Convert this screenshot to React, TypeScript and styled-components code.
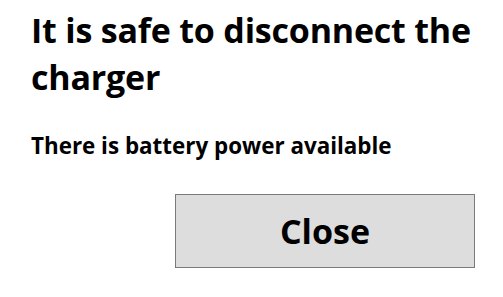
import styled, { createGlobalStyle } from 'styled-components';

const GlobalStyle = createGlobalStyle`
  html, body {
    margin: 0;
    padding: 0;
    background: #ffffff;
  }
  body {
    font-family: 'Open Sans', 'Noto Sans', 'Liberation Sans', sans-serif;
    color: #000000;
  }
`;

const Dialog = styled.div`
  width: 503px;
  height: 297px;
  box-sizing: border-box;
  padding: 7px 28px 0 31px;
  display: flex;
  flex-direction: column;
`;

const Title = styled.h1`
  margin: 0;
  font-size: 34px;
  font-weight: 700;
  line-height: 47px;
  letter-spacing: -0.2px;
`;

const Message = styled.p`
  margin: 30px 0 0;
  font-size: 22.4px;
  font-weight: 700;
  line-height: 30px;
`;

const Actions = styled.div`
  display: flex;
  justify-content: flex-end;
  margin-top: 33px;
`;

const Button = styled.button`
  width: 300px;
  height: 74px;
  box-sizing: border-box;
  background: #dddddd;
  border: 1px solid #7a7a7a;
  border-radius: 0;
  font-family: inherit;
  font-size: 34px;
  font-weight: 700;
  color: #000000;
  cursor: pointer;
`;

export default function App() {
  return (
    <>
      <GlobalStyle />
      <Dialog>
        <Title>It is safe to disconnect the charger</Title>
        <Message>There is battery power available</Message>
        <Actions>
          <Button>Close</Button>
        </Actions>
      </Dialog>
    </>
  );
}
